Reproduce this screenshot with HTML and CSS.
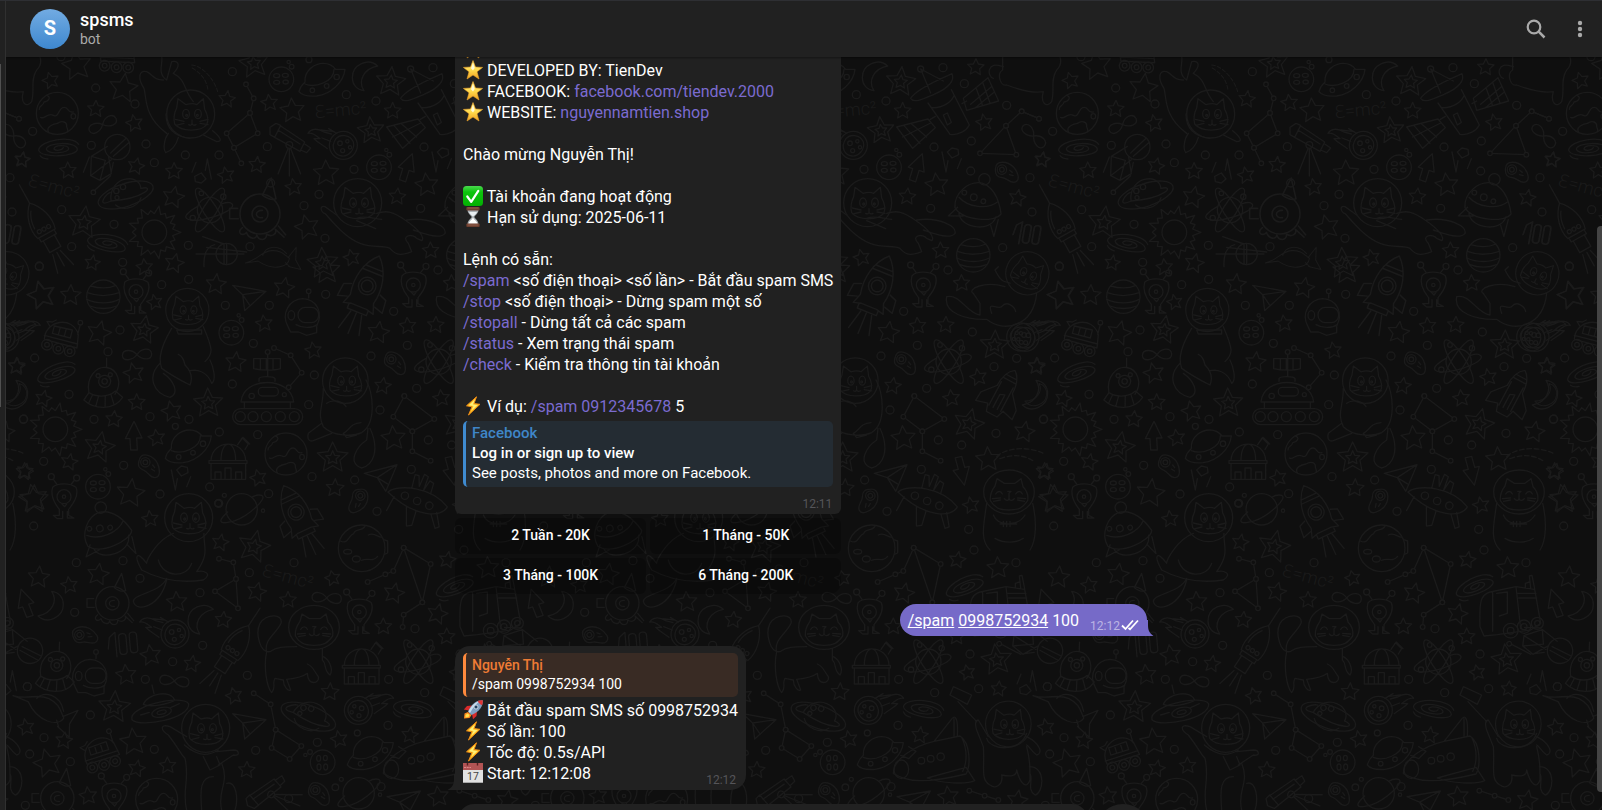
FILE: index.html
```
<!DOCTYPE html>
<html lang="vi">
<head>
    <meta charset="UTF-8">
    <meta name="viewport" content="width=device-width, initial-scale=1.0">
    <title>spsms</title>
    <link rel="stylesheet" href="styles.css">
</head>
<body>
    <!-- Shared emoji -->
    <svg class="defs" width="0" height="0" aria-hidden="true">
        <defs>
            <linearGradient id="gold" x1="0" y1="0" x2="0" y2="1">
                <stop offset="0" stop-color="#ffef8a"/>
                <stop offset=".55" stop-color="#ffd84a"/>
                <stop offset="1" stop-color="#f0a020"/>
            </linearGradient>
            <linearGradient id="green" x1="0" y1="0" x2="0" y2="1">
                <stop offset="0" stop-color="#4bd94f"/>
                <stop offset=".3" stop-color="#0cc40c"/>
                <stop offset="1" stop-color="#03b003"/>
            </linearGradient>
            <symbol id="e-star" viewBox="0 0 20 20">
                <path d="M10 .5 12.5 7 19.6 7.4 14 11.8 16 19 10 15 4 19 6 11.8.4 7.4 7.5 7Z" fill="url(#gold)" stroke="#eda52b" stroke-width=".6" stroke-linejoin="round"/>
                <path d="M10 3 11.7 8.1 10 10.5 8 8.3Z" fill="#fffbd8"/>
            </symbol>
            <symbol id="e-check" viewBox="0 0 20 20">
                <rect width="20" height="20" rx="3.5" fill="url(#green)"/>
                <path d="M4.300 10.500 8.200 15.800 15.300 4.800" fill="none" stroke="#fff" stroke-width="2.200" stroke-linecap="round" stroke-linejoin="round"/>
            </symbol>
            <symbol id="e-hourglass" viewBox="0 0 20 20">
                <path d="M4.500 2.500h11c0 4-3 5.500-4.300 7.500 1.300 2 4.300 3.500 4.300 7.500h-11c0-4 3-5.500 4.300-7.500C7.500 8 4.500 6.500 4.500 2.500Z" fill="#a9b0b4"/>
                <path d="M6 5h8c-.6 2-2.500 3-4 4.500C8.500 8 6.600 7 6 5Z" fill="#e9eef1"/>
                <path d="M10 10.500c1 2.500 4 3.500 4.500 6.500h-9c.5-3 3.500-4 4.500-6.500Z" fill="#fff"/>
                <rect x="3.300" y="0" width="13.400" height="3.400" rx="1" fill="#6b3d2e"/>
                <rect x="3.300" y="16.600" width="13.400" height="3.400" rx="1" fill="#6b3d2e"/>
                <path d="M4.500 1h11M4.500 18h11" stroke="#a8705a" stroke-width=".7"/>
            </symbol>
            <symbol id="e-bolt" viewBox="0 0 20 20">
                <path d="M13.500.8 3.500 9.800 9 10.800 5.500 19 17 8.300 11 7.600Z" fill="#ffc928" stroke="#f08c14" stroke-width="1" stroke-linejoin="round"/>
                <path d="M12 3.500 6 9.200 10.500 10 8.500 14.500 14.500 9 9.800 8.400Z" fill="#fff07a"/>
            </symbol>
            <symbol id="e-rocket" viewBox="0 0 20 20">
                <path d="M5 12 1.500 13.500 1 18.500 6.500 18 8.500 15Z" fill="#ff8a1e"/>
                <path d="M4.500 13.500 2.500 15v2.500l3-.5 1-2Z" fill="#ffe14d"/>
                <path d="M9 5.500 4 6 .8 9.500 6 10.500ZM14 11l-.5 5-3.500 3.200L9 14Z" fill="#d92b2b"/>
                <path d="M19.800.3C14 .2 9 3 5 11.500L8.500 15C17 11.500 20 6 19.800.3Z" fill="#7f9fc0"/>
                <path d="M17 1C12 2 8.500 5.500 5.500 11.500L7 13C10 7 14 3 17 1Z" fill="#c9dcec"/>
                <path d="M19.800.3c-2-.2-3.800.1-5 .6.800 2 2.200 3.500 4.300 4.300.6-1.600.8-3.200.7-4.900Z" fill="#e03434"/>
                <circle cx="13" cy="7" r="2" fill="#23405e" stroke="#dfe9f2" stroke-width=".8"/>
            </symbol>
            <symbol id="e-calendar" viewBox="0 0 20 20">
                <rect width="20" height="20" fill="#e2e2e2"/>
                <rect width="20" height="7" fill="#b25454"/>
                <path d="M1 4.500h7" stroke="#d88" stroke-width="1.200" stroke-dasharray="2 .7"/>
                <path d="M4.500 0v2.500M14.500 0v2.500" stroke="#552020" stroke-width="1.400"/>
                <path d="M0 19.500h20" stroke="#aaa"/>
                <text x="10" y="17.400" text-anchor="middle" font-size="10.500" fill="#444" font-family="Roboto, sans-serif">17</text>
            </symbol>
        </defs>
    </svg>

    <div class="app">
        <aside class="sidebar">
            <div class="sidebar-thumb"></div>
        </aside>

        <main class="chat">
            <svg class="wallpaper" id="wallpaper" aria-hidden="true"></svg>

            <header class="header">
                <div class="avatar">S</div>
                <div class="peer">
                    <h1>spsms</h1>
                    <p>bot</p>
                </div>
                <div class="header-actions">
                    <button type="button" class="icon-btn" aria-label="Search">
                        <svg width="24" height="24" viewBox="0 0 24 24" fill="none" stroke="currentColor">
                            <circle cx="10" cy="10" r="6.300" stroke-width="2.200"/>
                            <path d="M14.700 14.700 20.500 20.500" stroke-width="2.500"/>
                        </svg>
                    </button>
                    <button type="button" class="icon-btn" aria-label="More actions">
                        <svg width="24" height="24" viewBox="0 0 24 24" fill="currentColor">
                            <circle cx="12" cy="6" r="2.200"/>
                            <circle cx="12" cy="12" r="2.200"/>
                            <circle cx="12" cy="18" r="2.200"/>
                        </svg>
                    </button>
                </div>
            </header>

            <div class="messages">
                <div class="column">
                    <div class="message message-menu">
                        <div class="bubble">
                            <div class="text">
                                <svg class="emoji"><use href="#e-star"/></svg><br>
                                <svg class="emoji"><use href="#e-star"/></svg> DEVELOPED BY: TienDev<br>
                                <svg class="emoji"><use href="#e-star"/></svg> FACEBOOK: <a href="#">facebook.com/tiendev.2000</a><br>
                                <svg class="emoji"><use href="#e-star"/></svg> WEBSITE: <a href="#">nguyennamtien.shop</a><br>
                                <br>
                                Chào mừng Nguyễn Thị!<br>
                                <br>
                                <svg class="emoji"><use href="#e-check"/></svg> Tài khoản đang hoạt động<br>
                                <svg class="emoji"><use href="#e-hourglass"/></svg> Hạn sử dụng: 2025-06-11<br>
                                <br>
                                Lệnh có sẵn:<br>
                                <a href="#">/spam</a> &lt;số điện thoại&gt; &lt;số lần&gt; - Bắt đầu spam SMS<br>
                                <a href="#">/stop</a> &lt;số điện thoại&gt; - Dừng spam một số<br>
                                <a href="#">/stopall</a> - Dừng tất cả các spam<br>
                                <a href="#">/status</a> - Xem trạng thái spam<br>
                                <a href="#">/check</a> - Kiểm tra thông tin tài khoản<br>
                                <br>
                                <svg class="emoji"><use href="#e-bolt"/></svg> Ví dụ: <a href="#">/spam</a> <a href="#">0912345678</a> 5
                            </div>
                            <div class="quote quote-link">
                                <div class="quote-title">Facebook</div>
                                <div class="quote-strong">Log in or sign up to view</div>
                                <div>See posts, photos and more on Facebook.</div>
                            </div>
                            <div class="time-row"><span class="time">12:11</span></div>
                        </div>
                        <div class="keyboard">
                            <button type="button">2 Tuần - 20K</button>
                            <button type="button">1 Tháng - 50K</button>
                            <button type="button">3 Tháng - 100K</button>
                            <button type="button">6 Tháng - 200K</button>
                        </div>
                    </div>

                    <div class="message message-out">
                        <div class="bubble">
                            <div class="text"><a href="#">/spam</a> <a href="#">0998752934</a> 100</div>
                            <span class="time">12:12</span>
                            <svg class="ticks" width="18" height="12" viewBox="0 0 18 12" fill="none" stroke="#fff" stroke-width="1.800">
                                <path d="M1 6.500 4.500 10 12 1.500M7.500 9 9 10.300 17 1.500"/>
                            </svg>
                            <svg class="tail" width="7" height="16" viewBox="0 0 7 16"><path d="M0 0v16h6.500C3 13.500 1 11 1 5V0Z" fill="#766ac8"/></svg>
                        </div>
                    </div>

                    <div class="message message-in">
                        <div class="bubble">
                            <div class="quote quote-reply">
                                <div class="quote-title">Nguyễn Thị</div>
                                <div>/spam 0998752934 100</div>
                            </div>
                            <div class="text">
                                <svg class="emoji"><use href="#e-rocket"/></svg> Bắt đầu spam SMS số 0998752934<br>
                                <svg class="emoji"><use href="#e-bolt"/></svg> Số lần: 100<br>
                                <svg class="emoji"><use href="#e-bolt"/></svg> Tốc độ: 0.5s/API<br>
                                <svg class="emoji"><use href="#e-calendar"/></svg> Start: 12:12:08
                            </div>
                            <span class="time">12:12</span>
                            <svg class="tail" width="8" height="16" viewBox="0 0 8 16"><path d="M8 0v16H.5C5 13.500 7 11 7 5V0Z" fill="#212121"/></svg>
                        </div>
                    </div>
                </div>
                <div class="scroll-thumb"></div>
            </div>

            <div class="composer">
                <input type="text" aria-label="Message">
                <button type="button" aria-label="Record voice message"></button>
            </div>
        </main>
    </div>

    <script src="wallpaper.js"></script>
</body>
</html>
```
FILE: styles.css
```
* {
    margin: 0;
    padding: 0;
    box-sizing: border-box;
}

:root {
    --surface: #212121;
    --background: #0f0f0f;
    --doodle: #1b1b1b;
    --link: #7b6bd0;
    --own: #766ac8;
    --muted: #aaaaaa;
}

body {
    background: var(--background);
    color: #fff;
    font-family: Roboto, 'Noto Sans', sans-serif;
    font-size: 16px;
    line-height: 21px;
    overflow: hidden;
}

button,
input {
    font: inherit;
    color: inherit;
    border: none;
    outline: none;
}

button {
    cursor: pointer;
}

a {
    color: var(--link);
    text-decoration: none;
}

.defs {
    position: absolute;
}

.app {
    display: flex;
    height: 100vh;
    border-top: 1px solid #2e2f33;
}

.sidebar {
    width: 6px;
    flex-shrink: 0;
    padding-top: 63px;
    background: var(--surface);
    border-right: 1px solid #303030;
}

.sidebar-thumb {
    width: 1px;
    height: 46%;
    background: #505050;
}

.chat {
    position: relative;
    flex: 1;
    min-width: 0;
    display: flex;
    flex-direction: column;
    overflow: hidden;
}

.wallpaper {
    position: absolute;
    inset: 0;
    width: 100%;
    height: 100%;
    fill: none;
    stroke: var(--doodle);
    stroke-width: 4;
    stroke-linecap: round;
    stroke-linejoin: round;
}

.wallpaper text {
    fill: var(--doodle);
    stroke: none;
    font-size: 54px;
    font-weight: 300;
}

/* Header */
.header {
    position: relative;
    z-index: 1;
    flex-shrink: 0;
    display: flex;
    align-items: center;
    height: 56px;
    padding: 0 10px 0 24px;
    background: var(--surface);
    box-shadow: 0 1px 2px rgba(0, 0, 0, 0.4);
}

.avatar {
    width: 40px;
    height: 40px;
    margin-right: 10px;
    border-radius: 50%;
    background: linear-gradient(#72abe2, #3e88cf);
    font-size: 20px;
    font-weight: 700;
    line-height: 39px;
    text-align: center;
}

.peer h1 {
    font-size: 18px;
    font-weight: 500;
    line-height: 20px;
}

.peer p {
    color: var(--muted);
    font-size: 14px;
    line-height: 18px;
}

.header-actions {
    display: flex;
    gap: 20px;
    margin-left: auto;
}

.icon-btn {
    height: 24px;
    background: none;
    color: var(--muted);
}

/* Messages */
.messages {
    position: relative;
    flex: 1;
    min-height: 0;
    display: flex;
    flex-direction: column;
    justify-content: flex-end;
    padding: 0 12px 14px 6px;
    overflow: hidden;
}

.column {
    width: 100%;
    max-width: 692px;
    margin: 0 auto;
    display: flex;
    flex-direction: column;
    align-items: flex-start;
    gap: 10px;
}

.bubble {
    position: relative;
    padding: 0 8px;
    background: var(--surface);
}

.message-menu .bubble {
    border-radius: 0 0 6px 6px;
}

.emoji {
    width: 20px;
    height: 20px;
    vertical-align: top;
}

.quote {
    padding: 2px 8px 4px 6px;
    border-left: 3px solid;
    border-radius: 5px;
    font-size: 15px;
    line-height: 20px;
}

.quote div {
    color: #fff;
}

.quote-link {
    margin-top: 4px;
    background: #242c33;
    border-color: #3f8bd0;
}

.quote .quote-title,
.quote-strong {
    font-weight: 500;
}

.quote-link .quote-title {
    color: #3f86c8;
}

.quote-reply {
    margin-bottom: 3px;
    padding: 3px 8px 3px 6px;
    background: #392b24;
    border-color: #ff8a3d;
    font-size: 14px;
    line-height: 19px;
}

.quote-reply .quote-title {
    color: #ee7b34;
}

.time {
    color: #555559;
    font-size: 12px;
    line-height: 14px;
}

.time-row {
    height: 27px;
    padding: 5px 1px 0 0;
    text-align: right;
}

.keyboard {
    display: grid;
    grid-template-columns: 1fr 1fr;
    gap: 4px;
    padding-top: 4px;
}

.keyboard button {
    height: 36px;
    padding-bottom: 2px;
    border-radius: 6px;
    background: rgba(0, 0, 0, 0.25);
    font-size: 14px;
    font-weight: 500;
}

.keyboard button:nth-child(3) {
    border-bottom-left-radius: 12px;
}

.keyboard button:nth-child(4) {
    border-bottom-right-radius: 12px;
}

.message-out {
    align-self: flex-end;
}

.message-out .bubble {
    display: flex;
    align-items: flex-end;
    height: 32px;
    padding-bottom: 5px;
    border-radius: 16px 16px 0 16px;
    background: var(--own);
}

.message-out a {
    color: #fff;
    text-decoration: underline;
}

.message-out .time {
    margin: 0 1px 0 11px;
    color: #bbb4e4;
    line-height: 10px;
}

.message-out .tail {
    position: absolute;
    left: 100%;
    bottom: 0;
}

.message-in .bubble {
    padding: 7px 8px 6px;
    border-radius: 15px 15px 15px 0;
}

.message-in .time {
    position: absolute;
    right: 10px;
    bottom: 3px;
}

.message-in .tail {
    position: absolute;
    right: 100%;
    bottom: 0;
}

.scroll-thumb {
    position: absolute;
    top: 169px;
    right: 0;
    bottom: 12px;
    width: 5px;
    border-radius: 4px 0 0 4px;
    background: #444;
}

/* Message box, mostly below the fold */
.composer {
    position: relative;
    flex-shrink: 0;
    display: flex;
    gap: 8px;
    width: 100%;
    max-width: 692px;
    height: 54px;
    margin: 0 auto -48px;
}

.composer input {
    flex: 1;
    min-width: 0;
    padding: 0 16px;
    border-radius: 16px;
    background: var(--surface);
}

.composer button {
    width: 54px;
    border-radius: 50%;
    background: var(--surface);
}
```
FILE: wallpaper.js
```
// Space wallpaper: one tile of doodles, repeated across the chat.
// Doodles are drawn at three units per pixel.
const UNIT = 3;
const TILE = 510;

const shapes = {
    earth: '<circle r="63"/><path d="M-32-54C-18-50-25-36-40-34-42-20-55-26-54-12M-50 12C-38 20-30-4-12 6 6 16 2-20 22-18 34-18 30 0 48-4M-26 57C-36 40-12 32 0 30 14 20 30 26 28 40 30 48 34 50 30 55"/><ellipse cx="48" cy="9" rx="7" ry="8"/>',
    crater: '<circle r="37"/><ellipse cx="-14" cy="-11" rx="9" ry="6"/><ellipse cx="12" cy="-12" rx="9" ry="6"/><ellipse cx="-14" cy="9" rx="9" ry="6"/><ellipse cx="13" cy="8" rx="8" ry="6"/><circle cx="22" cy="-52" r="5"/><circle cx="31" cy="-38" r="7"/>',
    ufo: '<path d="M-68 35C-62 10-50 10-50 5-52-30-20-50 5-50 25-50 36-40 42-32L70-32C66 5 30 42-15 48-40 50-60 45-68 35ZM-50 12C-20 25 38 5 37-32"/><circle cx="-28" cy="31" r="7"/><circle cx="15" cy="18" r="7"/><circle cx="45" cy="-9" r="8"/><circle cx="-38" cy="-61" r="9"/>',
    moon: '<path d="M38-30C10-56-38-35-38 5-38 25-25 42-3 44-22 16-5-22 38-30Z"/>',
    emc: '<text x="-78" y="18">Ɛ=mc²</text>',
    spiral: '<path d="M60-12C40-42-56-24-60 5-55 32 58 25 56 2 50-22-35-18-37 3-30 20 32 14 30 0 25-12-15-10-14 2-8 9 10 6 14-2M-56 22C-50 30-40 32-32 32"/>',
    infinity: '<path d="M0 0C14-22 42-22 44-2 44 18 16 16 0 0-14-16-42-18-44 2-42 22-14 18 0 0Z"/>',
    comet: '<path d="M-6-28L-28-34C-50-48-70-42-76-30-60-34-52-22-40-14L-58-14C-44 0-30 6-18 16M-8-6L-34-16M10-30L-14-44M-2-36L-36-40"/><circle cx="30" cy="6" r="42"/><path d="M8-14C20-28 50-28 60-4 66 20 44 40 26 38 4 36-10 12 8-14Z"/><circle cx="20" cy="0" r="7"/><circle cx="42" cy="-6" r="5"/><circle cx="28" cy="22" r="6"/><circle cx="50" cy="12" r="5"/>',
    telescope: '<path d="M-58-58L-40-70-26-64-44-28-58-36ZM-26-62L46-14 32 14-44-28M-34-50L32-8M46-8L64 4 52 18 34 10M-4 6L-34 82M0 6V88M4 6L34 82"/><circle cy="-5" r="10"/>',
    saturn: '<path d="M-44 18C-52-56 40-68 46-20M-30 30C-10 48 36 40 46 8"/><ellipse rx="86" ry="34" transform="rotate(-18)"/><path d="M-44 18C-90 40-60-4-46-8M46-20C90-30 60 10-44 18"/><circle cx="-28" cy="-12" r="8"/><circle cx="-8" cy="-24" r="8"/><circle cx="-26" cy="8" r="6"/>',
    ringed: '<circle r="47"/><path d="M-42 8C-80 42-60 46-20 34 20 20 80-34 60-42 52-44 40-42 30-36"/><circle cx="-52" cy="-42" r="6"/><circle cx="-70" cy="-18" r="10"/><circle cx="64" cy="4" r="5"/>',
    rocket: '<path d="M0-75C28-48 40-5 30 30L-30 30C-40-5-28-48 0-75ZM0-75V-138M-8-52C-20-35-24-15-24 0M-26 34V44H26V34M-19 46V84H19V46M-14 94L-28 150M0 94V140M12 94L26 150"/><circle cx="-16" cy="14" r="6"/><circle cy="14" r="6"/><circle cx="16" cy="14" r="6"/>',
    bigRocket: '<path d="M0-92C34-60 44-10 34 34L44 62 22 56H-22L-44 62-34 34C-44-10-34-60 0-92ZM-24-56H24M-28-44H28M-28 58V72H28V58M-16 76L-30 130M0 76V136M16 76L30 130"/><circle cy="-4" r="24"/><circle cy="-4" r="16"/><path d="M-42 6L-62 14-66 50-40 42M42 6L62 14 66 50 40 42"/>',
    shuttle: '<path d="M0-85C22-70 26-40 26-20L60 20 62 50 26 40 18 64-18 64-26 40-62 50-60 20-26-20C-26-40-22-70 0-85ZM-18-62H18M-22-50H22M-20-36V44M20-36V44M-6 44V0L8-6V44"/>',
    sun: '<circle r="37"/>',
    atom: '<circle r="38"/><ellipse rx="76" ry="20" transform="rotate(58)"/><ellipse rx="76" ry="20" transform="rotate(-58)"/><path d="M-38-10C-90 20-80 34-30 30 30 20 90-10 60-22 50-24 40-20 34-18"/><circle cx="-26" cy="-50" r="7"/><circle cx="40" cy="-40" r="8"/><circle cx="-52" cy="24" r="8"/>',
    pod: '<circle r="50"/><circle r="20"/><path d="M6-9C-14-10-14 12 6 9M6-47L28-90 40-38C30-34 18-38 6-47M-56-14H-76V12H-54M-44 34C-60 46-44 58-34 46-28 62-10 66-8 52-4 68 18 68 16 50 30 60 44 48 38 38L60 58M46 30L64 52"/>',
    cat: '<circle r="72"/><path d="M-48 30C-54 6-46-10-42-18L-38-46-14-28C0-32 10-32 18-28L38-46 42-14C52 2 54 22 48 32 30 54-28 54-48 30Z"/><ellipse cx="-14" cy="0" rx="10" ry="14"/><ellipse cx="22" cy="0" rx="10" ry="14"/><circle cx="-12" cy="4" r="3"/><circle cx="20" cy="4" r="3"/><path d="M4 18V28M-6 32C0 36 4 32 4 28 4 32 10 36 16 32M-20 22L-46 16M-20 28L-44 34M28 22L52 16M28 28L52 32"/>',
    happyCat: '<ellipse rx="76" ry="66"/><path d="M-56 26C-58 6-48-10-42-18L-36-40-14-26H18L36-40 42-16C54-4 58 14 56 26 40 48 30 54 0 54-30 54-44 46-56 26Z"/><path d="M-40 6C-34-4-24-4-20 6M20 6C26-4 36-4 40 6M-4-2H6L0 4V18M-14 20C-8 28 0 26 0 18 0 26 10 28 16 20M-50 20L-26 18M50 20L26 18M-46 28L-26 24M46 28L26 24"/>',
    alien: '<path d="M-34-28C-20-42 18-42 36-28 48 0 20 30 14 38V56L30 64H10V44M-34-28C-44 4-20 30-14 38V56H-32L-20 66H-4V44M-6 22L2 30 8 22M-22-38L-32-52M22-38L32-50"/><circle r="21"/><circle r="5"/><circle cx="-38" cy="-60" r="9"/><circle cx="38" cy="-56" r="9"/>',
    alienUfo: '<path d="M-42 26C-58-20-30-56 0-56 34-56 54-16 36 20M-42 26L-54 50C-20 74 40 70 60 26L36 10C16 34-20 36-42 26M-30 30L-38 56M-12 34L-16 64M8 30L12 62M24 22L38 52M0-56L-4-84"/><circle cy="-14" r="18"/><circle cy="-14" r="8"/><circle cx="-22" cy="-28" r="6"/><circle cx="14" cy="-36" r="6"/>',
    stripes: '<circle r="50"/><path d="M-38-32C-10-24 20-26 38-34M-48-12C-16 0 20-2 48-12M-50 8C-20 22 20 22 48 8M-40 28C-16 38 16 38 40 28"/>',
    rover: '<path d="M-50 8C-48-50 36-64 52-6L48 34-50 8ZM-50-4L50 22M-20-32L34-20 28 4-26-10ZM-2-28L-8-6M16-24L10-2M50-6L58-36M-34-32L-42-46-26-44-14-50"/><circle cx="-42" cy="24" r="16"/><circle cx="-42" cy="24" r="7"/><circle cx="-8" cy="36" r="16"/><circle cx="-8" cy="36" r="7"/><circle cx="26" cy="44" r="16"/><circle cx="26" cy="44" r="7"/><circle cx="58" cy="-42" r="7"/>',
    helmet: '<path d="M-44 30C-66-10-40-52 0-54 44-52 62-10 42 28V48L12 56-12 46H-36ZM18-56V-68"/><rect x="-14" y="-28" width="62" height="46" rx="22"/><path d="M-20 24C0 36 30 34 44 24"/><ellipse cx="-34" cy="-4" rx="10" ry="14"/><circle cx="18" cy="-76" r="7"/>',
    tank: '<path d="M-80 18C-74-60 70-60 78 18ZM-70 20V38M68 20V38M-26-44V-52C-24-60 18-60 22-52V-44M0-58V-124M-42-112H38V-82C20-76-20-76-42-82ZM-22-110V-80M-4-110V-78M16-110V-78"/><rect x="-105" y="38" width="210" height="48" rx="24"/><rect x="-28" y="-26" width="60" height="26" rx="12"/><circle cx="-82" cy="62" r="15"/><circle cx="-44" cy="62" r="15"/><circle cx="-4" cy="62" r="15"/><circle cx="38" cy="62" r="15"/><circle cx="80" cy="62" r="15"/><circle cy="-132" r="7"/><circle cx="-48" cy="0" r="8"/><circle cx="50" cy="-4" r="6"/>',
    observatory: '<path d="M-52 0C-50-66 50-66 52 0M-22 0C-22-66 22-66 22 0M-58 0H56V8H-58ZM-52 8V56H52V8M-40 56V34H-22V56M-10 56V22H8V56M22 56V34H40V56M28-48L42-68 60-50 50-34M38-64L44-70 64-50"/>',
    plane: '<path d="M-52-24L48-6-16 52-22 4ZM-22 4L48-6M-22 4L-6 28-2 34M-52-24L-22 4"/>',
    potato: '<path d="M-28-18C-20-44 14-30 26-8 36 14 34 34 20 36 4 38 0 20-14 14-30 8-34 0-28-18Z"/><circle cx="-10" cy="-10" r="14"/><circle cx="-10" cy="-10" r="7"/><path d="M12-2L18 6M8 10L18 16"/>',
    arrow: '<path d="M2-44L26 6H10L12 42H-8L-10 8H-24Z"/>',
    flyer: '<path d="M-90-30C-60-58 40-58 92-4 80 30 0 40-90-30ZM-20-48L-14-90-2-88 2-56 14-94 26-88 16-46 32-76 44-70 38-38M-70-18L-88 26M-30 10L-24 66-8 62 0 18M46 24L62 64 74 58 62 16"/><circle cx="-38" cy="-24" r="11"/><circle cy="-12" r="11"/><circle cx="38" cy="-2" r="11"/>',
    saucer: '<path d="M-86 34C-100-4 60-44 84-14 90 30-60 60-86 34ZM-52-12C-40-44 30-58 42-24M-52-12C-30-2 20-12 42-24M-20-44L-26-70M-60 20L-34 12M30-2L56-14"/><ellipse rx="30" ry="14" cy="12" transform="rotate(-14)"/><ellipse rx="14" ry="6" cy="12" transform="rotate(-14)"/>',
    lander: '<circle cx="22" cy="-24" r="38"/><path d="M2-6L48-50M10 4L58-38M-8-26L-56 4-58 62-30 76 4 56-4 6M-56 4L-14 16-30 76M-58 62L4 14M-62 6L-80 52M2 62L-46 106M4 50L10 22"/><circle cx="-50" cy="112" r="7"/>',
    probe: '<path d="M-60-20L60-6M-68 38C-70 0-60-22-36-28M-92 0H52M40 0H48"/><circle r="32"/><path d="M0-32V32M-8-32V32M-72-52L-8-30"/>',
    topHat: '<path d="M-68 22C-76-20-40-62 0-62 40-56 60-20 72 22 60 50-40 60-68 22ZM-60-10C-30 16 30 16 58-14M-54 34C-50 80 50 86 58 32M-40 44L-84 50-60 20M44 56L60 92 66 40"/><circle cx="8" cy="-74" r="17"/><circle cx="-46" cy="-26" r="7"/><circle cx="-16" cy="-16" r="10"/><circle cx="14" cy="-8" r="7"/>',
    jet: '<path d="M-108-30C-60-24-40-50 0-40 34-30 40-10 54 10 40 40-20 36-60-20ZM-36-34C-20-60 30-60 50-10M50 6L92-20 74 24 80 64 40 38M34 20L44 40"/>',
    satellite: '<path d="M-88-20C-70-50 10-82 36-94 44-76 30-52-18-32-50-18-78-4-88-20ZM-58-108L-28-36M-58-108L10-72M-36-6L30 88C56 92 80 76 88 60L34-46M-24 8C10 10 34-10 42-28M66-4L80-12M-14 34L-30 44M10 30L22 60 34 52 22 24Z"/><path d="M70-20L144-82 176-12 80 16ZM92-2L156-56M106 8L164-40M108-52L128 2M128-68L150-6M-130 66L-36 42-14 68-82 130ZM-108 62L-60 116M-86 56L-40 96M-112 96L-28 54"/><circle cx="-58" cy="-108" r="9"/>',
    truck: '<path d="M-92 50C-94-20-92-46-62-54L16-70 72-62 90 40 60 60M-92 50L-80 78-40 74 60 60M-54-52V64M-42-50L-10-54V10L-34 18M16-70L30 56M22-50H76M24-36H78M44-66V-80L56-84M60-66L56-102 64-104 72-64"/><circle cx="0" cy="62" r="22"/><circle cx="0" cy="62" r="10"/><circle cx="40" cy="50" r="20"/><circle cx="40" cy="50" r="9"/><circle cx="80" cy="40" r="18"/><circle cx="80" cy="40" r="8"/>',
    bigShuttle: '<path d="M-122 62C-122 20-60-20 0-34L78-50C110-30 110 40 96 64-20 92-80 90-122 62ZM0-34L54-102C70-120 72-80 70-48M60-102V-48M84-44C100-10 100 30 86 56M-20 76L96 44 122 84C100 96 20 92-20 76M-100 8L-76 18-54-4-76-18"/><ellipse cx="-98" cy="50" rx="22" ry="28"/><circle cx="-38" cy="24" r="10"/><circle cx="-10" cy="18" r="10"/><circle cx="20" cy="12" r="11"/>',
    shards: '<path d="M-12-28L-24 2M-16 14L4 4 18 22 4 34-14 30ZM22-38L16-4M22-38L34 22"/>',
    bars: '<path d="M-40-26L-22-40V34M-40-26L-46 8"/><rect x="-12" y="-34" width="22" height="62" rx="10"/><rect x="20" y="-36" width="22" height="62" rx="10"/>',
    planet: '<circle r="70"/><path d="M-64-22C-40-10-40-40-24-44-20-60 0-50 10-66M20-40C40-50 50-30 60-34M66-26L78-22V14L68 18M0 36C20 26 30 44 48 24"/><ellipse cx="-42" cy="10" rx="12" ry="7"/><ellipse cx="-16" cy="32" rx="12" ry="9"/>',
    shooting: '<path d="M0 0C30-30 100-30 140-10M10 6C50-8 80-6 112 14" stroke-dasharray="14 8"/>'
};

// [shape, x, y, rotation, scale, flip]
const doodles = [
    ['earth', 172, 340], ['crater', 844, 238], ['crater', 1137, 502], ['ufo', 965, 240], ['moon', 1095, 228],
    ['emc', 1022, 330, -5], ['emc', 162, 560, 15], ['spiral', 176, 445], ['spiral', 322, 730, 15],
    ['infinity', 308, 374, -22], ['comet', 1000, 430], ['telescope', 868, 440], ['lander', 330, 465],
    ['saturn', 377, 585], ['rocket', 125, 675, -29], ['sun', 463, 697], ['atom', 630, 630],
    ['pod', 780, 642, 0, 1.2], ['cat', 572, 342], ['cat', 1073, 608], ['rover', 350, 165, -12],
    ['probe', 680, 762], ['jet', 825, 782, -20, .8], ['shards', 600, 515], ['shooting', 575, 195, 50, .8],
    ['bars', 20, 705, 10, .9],
    ['satellite', 1290, 315], ['infinity', 1571, 408, 48], ['potato', 1488, 516, -15], ['shards', 1330, 478, 180],
    ['arrow', 1220, 502, 20], ['topHat', 1405, 610, 8], ['stripes', 1390, 766], ['bars', 1552, 704, 10, .9],

    ['stripes', 310, 890], ['alien', 408, 875], ['cat', 562, 930, 0, .9], ['plane', 750, 880],
    ['crater', 694, 998], ['helmet', 908, 950], ['bigRocket', 1100, 862, 22, 1.1], ['alien', 1240, 855],
    ['comet', 45, 1006, 0, 1, 1], ['rover', 183, 1010], ['infinity', 411, 1064], ['spiral', 170, 1120, -15],
    ['alienUfo', 312, 1158, 8], ['moon', 45, 1185, 180], ['sun', 166, 1288], ['tank', 803, 1188],
    ['cat', 1036, 1142, 0, .95], ['potato', 1184, 1088], ['atom', 1316, 1085], ['arrow', 400, 1308],
    ['ufo', 564, 1340], ['potato', 446, 1397], ['observatory', 685, 1382], ['earth', 858, 1362],
    ['plane', 1150, 1420, -25], ['alien', 192, 1490], ['crater', 294, 1460], ['topHat', 320, 1595, -20],
    ['shards', 548, 1432, 180], ['cat', 566, 1553], ['ringed', 725, 1528], ['bigRocket', 890, 1540, -25],
    ['potato', 1075, 1500, 70], ['flyer', 1250, 1515, 6], ['planet', 1085, 1645],
    ['cat', 1552, 820, 25, .9], ['comet', 1562, 1005, 0, 1, 1], ['shuttle', 1475, 1186, 28],
    ['moon', 1579, 1185, 190, .8], ['arrow', 1356, 1412, 168], ['happyCat', 1497, 1476],
    ['shooting', 1460, 1370],

    ['arrow', 75, 1810, -18], ['moon', 152, 1818, 180], ['pod', 337, 1810], ['moon', 602, 1858],
    ['comet', 495, 1896], ['potato', 252, 1907, -35], ['bars', 370, 1935, -5], ['emc', 864, 1730, 15],
    ['infinity', 980, 1794, 8], ['alien', 1078, 1836], ['rocket', 705, 1940, 33], ['happyCat', 942, 1882],
    ['alienUfo', 168, 2010, 10], ['helmet', 270, 2032], ['infinity', 523, 2043, 10], ['observatory', 1085, 1996],
    ['atom', 1255, 1985], ['jet', 140, 2135, 10], ['saucer', 482, 2125], ['cat', 617, 2185],
    ['saturn', 925, 2150, 38], ['comet', 1105, 2125, 0, 1, 1], ['spiral', 1240, 2128, 14], ['plane', 750, 2165],
    ['rover', 300, 2260, -32], ['ufo', 1110, 2260], ['crater', 968, 2287, -90], ['bigShuttle', 1272, 2258],
    ['pod', 172, 2395], ['alien', 342, 2388], ['earth', 470, 2398], ['telescope', 818, 2385, -68],
    ['potato', 956, 2380], ['ringed', 1076, 2380], ['plane', 1218, 2395, -20],
    ['spiral', 1365, 1760, -18], ['truck', 1472, 1830], ['lander', 1590, 1940, 70], ['cat', 1495, 2172, 0, .95],
    ['shards', 1545, 2050]
];

// [x, y, radius]
const stars = [
    [152, 242, 26], [287, 327, 26], [403, 370, 26], [681, 298, 26], [808, 309, 26], [67, 479, 23], [204, 512, 26],
    [408, 499, 26], [522, 514, 26], [678, 526, 26], [771, 495, 26], [881, 562, 26], [277, 789, 24], [433, 802, 26],
    [523, 790, 30], [1178, 333, 26], [1055, 773, 26], [1192, 590, 26], [230, 197, 46], [370, 265, 45],
    [877, 332, 38], [520, 592, 34], [978, 520, 40], [921, 682, 38],
    [1397, 202, 26], [1423, 368, 26], [1597, 480, 24], [1280, 555, 36], [1522, 594, 26], [1292, 752, 26],
    [124, 886, 42], [212, 886, 32], [464, 907, 24], [648, 853, 32], [792, 971, 26], [852, 864, 32], [980, 812, 42],
    [297, 1000, 38], [50, 1098, 26], [401, 1120, 32], [707, 1087, 32], [940, 1052, 26], [1135, 998, 34],
    [1223, 978, 26], [130, 1196, 26], [410, 1207, 26], [515, 1234, 32], [342, 1258, 26], [470, 1314, 26],
    [1148, 1158, 26], [1180, 1315, 38], [208, 1386, 26], [74, 1414, 26], [775, 1434, 26], [1005, 1464, 28],
    [100, 1496, 44], [392, 1480, 44], [450, 1557, 26], [661, 1628, 26], [1355, 850, 26],
    [1655, 886, 44], [1307, 975, 26], [1405, 1132, 26], [1580, 1100, 26], [1324, 1195, 26], [1543, 1296, 32],
    [1434, 1378, 38], [1605, 1415, 26], [1632, 1498, 44], [1383, 1516, 26],
    [116, 1732, 34], [208, 1756, 26], [294, 1724, 34], [530, 1806, 32], [770, 1776, 30], [864, 1800, 26],
    [998, 1735, 24], [670, 1860, 26], [452, 1966, 32], [576, 1992, 26], [378, 2025, 32], [1182, 1780, 32],
    [1150, 1880, 26], [702, 2088, 26], [990, 2076, 28], [78, 2182, 26], [192, 2222, 26], [400, 2226, 42],
    [410, 2306, 26], [503, 2297, 26], [143, 2290, 44], [740, 2310, 26], [1017, 2218, 26], [1230, 2206, 26],
    [264, 2388, 28], [1342, 1680, 26], [1464, 1704, 34], [1312, 1842, 32], [1340, 1910, 26], [1372, 2018, 24],
    [1466, 2067, 24], [1315, 2390, 32], [1522, 2402, 32]
];

const doubleStars = [
    [762, 190, 46], [1172, 246, 46], [1113, 392, 42], [252, 668, 50], [968, 790, 48], [432, 990, 44],
    [625, 1210, 46], [298, 1342, 48], [998, 1374, 48], [762, 1640, 50], [1454, 1036, 46], [1376, 1272, 48],
    [343, 2122, 50], [1460, 1980, 48]
];

const dots = [
    287, 264, 405, 312, 98, 394, 274, 436, 438, 432, 697, 215, 1039, 284, 1128, 303, 802, 440, 556, 465, 657, 465,
    463, 488, 1062, 508, 812, 549, 957, 583, 912, 617, 30, 533, 36, 636, 185, 629, 342, 673, 215, 740, 368, 787,
    118, 798, 565, 736, 750, 740, 975, 715, 183, 170, 1299, 203, 1363, 251, 1490, 316, 1272, 441, 1384, 423,
    1382, 513, 1262, 625, 1478, 743,
    485, 854, 566, 838, 676, 916, 808, 916, 977, 883, 360, 990, 324, 1055, 104, 1074, 760, 1030, 697, 1152,
    207, 1183, 71, 1257, 282, 1258, 450, 1250, 567, 1258, 658, 1296, 773, 1304, 926, 1214, 943, 1125, 1113, 1068,
    1181, 934, 1222, 1036, 1140, 1230, 131, 1384, 371, 1396, 629, 1461, 480, 1482, 656, 1510, 806, 1481,
    936, 1430, 1064, 1440, 101, 1578, 1131, 1534, 1314, 810, 1648, 800, 1387, 996, 1520, 1075,
    1452, 1100, 1250, 1165, 1285, 1320, 1355, 1335, 1458, 1300, 1600, 1258, 1376, 1588, 1234, 1408,
    229, 1688, 369, 1682, 420, 1735, 600, 1778, 748, 1718, 882, 1688, 224, 1837, 608, 1936, 518, 1985, 742, 2026,
    436, 2038, 82, 2060, 271, 2145, 132, 2213, 89, 2262, 211, 2285, 463, 2248, 767, 2251, 952, 2227, 1166, 2038,
    1164, 2176, 1245, 1886, 1274, 2078, 866, 2396, 1143, 2360, 76, 2416, 1392, 1650, 1518, 1688, 1380, 1962,
    1406, 2066, 1612, 2060
];

const constellations = [
    [738, 253, 761, 295, 750, 339, 680, 400, 702, 443, 773, 400, 750, 339], [702, 443, 724, 490],
    [1587, 356, 1535, 334, 1488, 377, 1410, 460, 1519, 464, 1488, 377], [57, 356, 5, 334],
    [822, 1044, 872, 1066, 905, 1118, 866, 1162],
    [1213, 1188, 1303, 1257, 1237, 1294, 1180, 1250, 1213, 1188], [1237, 1294, 1237, 1354, 1292, 1382],
    [657, 1676, 700, 1687, 708, 1737, 645, 1774, 714, 1825, 708, 1737],
    [1103, 1746, 1156, 1723, 1180, 1713, 1211, 1643, 1292, 1692, 1267, 1807, 1211, 1643],
    [1267, 1807, 1211, 1844, 1208, 1881],
    [761, 2080, 812, 2113, 827, 2189, 904, 2238, 869, 2277, 815, 2244, 827, 2189],
    [1378, 2372, 1424, 2387, 1465, 2400]
];

// Cat bodies, tails and other loose lines
const loose = [
    'M498 342C498 390 530 410 570 415M580 305C550 270 560 240 520 220C540 200 540 180 515 185L500 240C470 220 490 190 485 170M500 400C430 350 440 290 432 265C410 230 420 210 440 215C460 225 460 240 490 240M505 400C490 420 490 450 497 458C520 450 530 430 535 412M610 405L650 425C670 425 660 410 638 392',
    'M1010 645L975 620C955 615 965 640 975 640C1010 680 1040 715 1080 730C1120 745 1150 735 1170 745C1190 770 1210 765 1235 755L1225 730C1200 705 1240 700 1250 715L1265 722C1275 715 1260 690 1215 660C1180 635 1160 630 1130 640M1220 660C1290 650 1340 680 1335 700C1320 720 1270 700 1240 690M1070 655C1090 645 1120 655 1145 658M1070 662L1127 686',
    'M1478 170V210C1460 220 1470 260 1490 255C1530 270 1570 280 1600 275C1590 310 1610 325 1625 305C1635 270 1620 240 1640 210C1660 190 1650 175 1650 170M1480 200C1430 180 1430 230 1450 235',
    'M515 985C470 1060 480 1090 485 1105C520 1130 560 1150 570 1155C580 1130 570 1110 555 1095C550 1070 540 1065 535 1063M610 980C640 1050 640 1060 615 1085M570 1112C590 1108 620 1112 635 1150C650 1140 640 1100 630 1080M480 1090C440 1130 460 1180 510 1192C540 1180 520 1140 490 1120M530 990H605V1002H535Z',
    'M970 1165C970 1220 950 1240 970 1280C1000 1310 1060 1310 1085 1298C1130 1270 1120 1180 1098 1140M980 1210C1000 1195 1030 1205 1038 1220M965 1270L925 1300C920 1320 930 1325 940 1322L995 1300M1083 1268C1050 1270 1050 1290 1030 1300L1040 1313L1070 1305M1110 1285C1140 1350 1120 1395 1085 1404C1040 1390 1070 1340 1100 1320L1104 1285',
    'M520 1600C470 1620 440 1680 440 1690C410 1650 400 1665 425 1710C480 1740 540 1750 610 1740C640 1720 610 1710 590 1715C630 1660 610 1640 612 1600M475 1680C490 1735 560 1735 575 1690M500 1735C480 1780 400 1780 400 1805C410 1840 480 1820 500 1740',
    'M890 1940C850 1940 830 1940 810 1955C780 1960 765 1900 780 1870C800 1840 850 1840 843 1870C830 1900 790 1920 800 1955C790 2000 800 2060 815 2078C830 2060 815 2050 825 2035L850 2040C850 2060 865 2075 872 2070L860 2038C890 2035 910 2030 922 2020C925 2060 960 2050 955 2030C940 2010 940 2000 922 1992M967 1945V1980C980 1990 970 2010 990 2025C1000 2010 990 1980 970 1970',
    'M553 2235C600 2275 630 2265 655 2250M560 2210L510 2180C480 2170 480 2190 505 2205C540 2250 540 2260 555 2275C570 2340 545 2370 560 2430M650 2255L700 2250C720 2250 720 2270 700 2265L655 2295M610 2270L630 2310L660 2295L650 2270M665 2290C690 2350 650 2370 665 2430M605 2430C600 2370 600 2330 640 2330M680 2350C710 2340 715 2400 705 2430',
    'M1430 2215C1440 2250 1530 2260 1550 2200M1435 2210L1405 2160C1395 2160 1395 2175 1400 2190L1420 2240C1425 2300 1410 2340 1440 2355C1460 2370 1480 2350 1475 2325C1500 2330 1520 2330 1520 2310C1530 2350 1550 2370 1560 2340C1560 2300 1560 2280 1550 2240M1550 2210C1590 2230 1600 2260 1580 2265C1560 2250 1560 2240 1550 2235M1558 2300C1610 2300 1600 2380 1575 2385C1550 2370 1570 2340 1560 2320M1400 2165L1344 2105M1330 2060L1385 2085L1372 2113L1320 2085Z',
    'M1465 800L1455 810C1480 860 1490 840 1500 850M1485 860C1420 840 1370 870 1390 880L1410 910V945C1370 940 1350 880 1310 890C1300 940 1370 960 1430 958C1480 1000 1570 980 1580 880M1445 940C1430 900 1460 930 1475 920C1490 900 1515 920 1517 935',
    'M1430 1510C1420 1580 1410 1620 1440 1650M1568 1510C1580 1560 1580 1620 1560 1650M1450 1545C1460 1570 1480 1570 1490 1570M1545 1545C1530 1570 1510 1570 1500 1570M1455 1615C1480 1630 1520 1630 1540 1615M1470 1572H1520M1480 1564V1580M1490 1564V1580M1500 1564V1580'
];

function starPath(x, y, r, turn) {
    let d = '';
    for (let i = 0; i < 10; i++) {
        const angle = (i * 36 - 90 + turn) * Math.PI / 180;
        const size = i % 2 ? r * 0.48 : r;
        d += (i ? 'L' : 'M') + Math.round(x + Math.cos(angle) * size) + ' ' + Math.round(y + Math.sin(angle) * size);
    }
    return d + 'Z';
}

function sunRays() {
    let d = '';
    for (let i = 0; i < 36; i++) {
        const angle = i * 10 * Math.PI / 180;
        const size = i % 2 ? 56 : (i % 4 ? 66 : 80);
        d += (i ? 'L' : 'M') + Math.round(Math.cos(angle) * size) + ' ' + Math.round(Math.sin(angle) * size);
    }
    return '<path d="' + d + 'Z"/>';
}

function buildTile() {
    shapes.sun += sunRays();
    let out = doodles.map(([name, x, y, turn = 0, scale = 1, flip = 0]) =>
        `<g transform="translate(${x} ${y}) rotate(${turn}) scale(${flip ? -scale : scale} ${scale})">${shapes[name]}</g>`
    ).join('');

    let d = loose.join('');
    stars.forEach(([x, y, r], i) => {
        d += starPath(x, y, r, (i * 17) % 30 - 15);
    });
    doubleStars.forEach(([x, y, r], i) => {
        const turn = (i * 13) % 24 - 8;
        d += starPath(x, y, r, turn) + starPath(x, y, r * 0.45, turn);
    });
    out += `<path d="${d}"/>`;

    for (let i = 0; i < dots.length; i += 2) {
        out += `<circle cx="${dots[i]}" cy="${dots[i + 1]}" r="12"/>`;
    }
    constellations.forEach(points => {
        out += `<polyline points="${points.join(' ')}"/>`;
        for (let i = 0; i < points.length; i += 2) {
            out += `<circle cx="${points[i]}" cy="${points[i + 1]}" r="7" fill="#0f0f0f"/>`;
        }
    });
    return out;
}

function drawWallpaper() {
    const wallpaper = document.getElementById('wallpaper');
    const count = Math.ceil(wallpaper.clientWidth / TILE) + 1;
    let html = `<defs><g id="tile">${buildTile()}</g></defs><g transform="translate(-6 -1) scale(${1 / UNIT})">`;
    for (let i = -1; i < count; i++) {
        html += `<use href="#tile" x="${i * TILE * UNIT}"/>`;
    }
    wallpaper.innerHTML = html + '</g>';
}

drawWallpaper();
```
